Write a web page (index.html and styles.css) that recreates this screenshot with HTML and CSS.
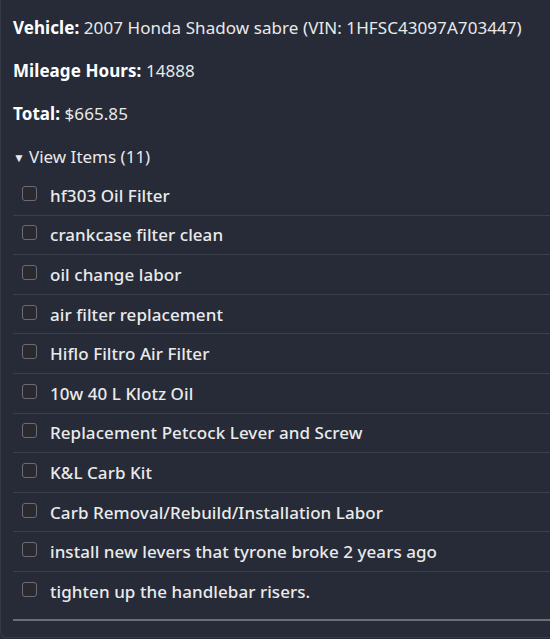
FILE: index.html
```
<!DOCTYPE html>
<html>
<head>
<meta charset="utf-8">
<link rel="stylesheet" href="styles.css">
</head>
<body>
<div class="card">
  <p class="info"><strong>Vehicle:</strong> 2007 Honda Shadow sabre (VIN: 1HFSC43097A703447)</p>
  <p class="info"><strong>Mileage Hours:</strong> 14888</p>
  <p class="info"><strong>Total:</strong> $665.85</p>
  <details class="items" open>
    <summary class="summary">View Items (11)</summary>
    <ul class="list">
      <li class="row"><input type="checkbox" class="box"><span class="label">hf303 Oil Filter</span></li>
      <li class="row"><input type="checkbox" class="box"><span class="label">crankcase filter clean</span></li>
      <li class="row"><input type="checkbox" class="box"><span class="label">oil change labor</span></li>
      <li class="row"><input type="checkbox" class="box"><span class="label">air filter replacement</span></li>
      <li class="row"><input type="checkbox" class="box"><span class="label">Hiflo Filtro Air Filter</span></li>
      <li class="row"><input type="checkbox" class="box"><span class="label">10w 40 L Klotz Oil</span></li>
      <li class="row"><input type="checkbox" class="box"><span class="label">Replacement Petcock Lever and Screw</span></li>
      <li class="row"><input type="checkbox" class="box"><span class="label">K&amp;L Carb Kit</span></li>
      <li class="row"><input type="checkbox" class="box"><span class="label">Carb Removal/Rebuild/Installation Labor</span></li>
      <li class="row"><input type="checkbox" class="box"><span class="label">install new levers that tyrone broke 2 years ago</span></li>
      <li class="row"><input type="checkbox" class="box"><span class="label">tighten up the handlebar risers.</span></li>
    </ul>
  </details>
  <div class="rule"></div>
</div>
</body>
</html>
```
FILE: styles.css
```
html, body {
  margin: 0;
  padding: 0;
  background: #262b37;
  overflow: hidden;
}
body {
  font-family: "Noto Sans", "Open Sans", sans-serif;
  color: #e9e9ea;
  font-size: 17px;
}
.card {
  box-sizing: border-box;
  height: 638px;
  padding: 14px 0 0 12px;
  border-left: 1px solid #353a46;
  border-bottom: 1px solid #353a46;
  border-bottom-left-radius: 6px;
}
.info {
  margin: 0 0 16px 0;
  line-height: 27px;
  white-space: nowrap;
  letter-spacing: 0.07px;
}
.info strong {
  color: #ffffff;
  font-weight: 700;
}
.items {
  margin: 0;
}
.summary {
  list-style: none;
  line-height: 27px;
  cursor: pointer;
}
.summary::-webkit-details-marker {
  display: none;
}
.summary::before {
  content: "▼";
  font-size: 12px;
  display: inline-block;
  width: 16px;
  vertical-align: 1px;
}
.list {
  list-style: none;
  margin: 5px 0 0 0;
  padding: 0;
}
.row {
  display: flex;
  align-items: center;
  gap: 13px;
  padding: 7.8px 0 7.8px 9px;
  line-height: 23px;
  border-bottom: 1px solid #3a3f4b;
  font-weight: 500;
  font-size: 17px;
  letter-spacing: 0.06px;
  color: #eaeaeb;
  white-space: nowrap;
}
.row:last-child {
  border-bottom: none;
}
.box {
  appearance: none;
  -webkit-appearance: none;
  box-sizing: border-box;
  width: 15px;
  height: 15px;
  margin: 0 0 4px 0;
  border: 1px solid #6c6c76;
  border-radius: 3px;
  background: #2a2930;
  flex: none;
}
.rule {
  margin-top: 8px;
  height: 2px;
  background: #6b6e74;
}
```
